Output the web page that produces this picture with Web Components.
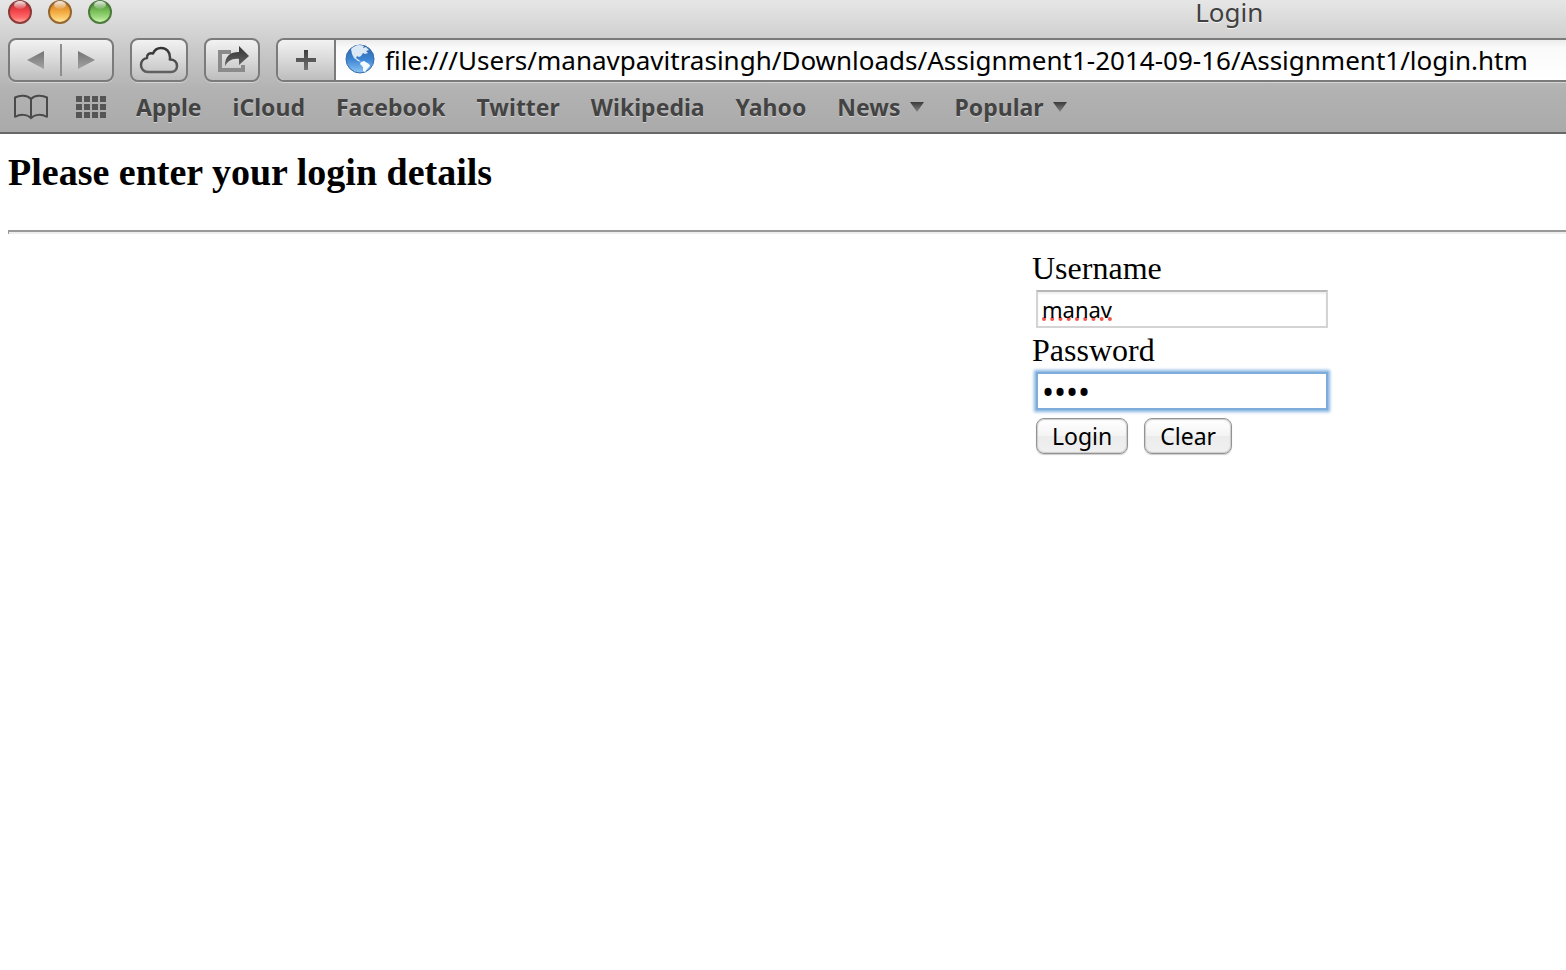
<!DOCTYPE html>
<html lang="en">
<head>
<meta charset="utf-8">
<title>Login</title>
<style>
  html, body { margin: 0; background: #fff; }
</style>
</head>
<body>
<browser-window></browser-window>
<script>
const define = (name, html) => {
  const template = document.createElement('template');
  template.innerHTML = html;
  customElements.define(name, class extends HTMLElement {
    constructor() {
      super();
      this.attachShadow({ mode: 'open' }).append(template.content.cloneNode(true));
    }
  });
};

define('window-title', `
  <style>
    :host { display: grid; grid-template-columns: 894fr 672fr; height: 38px; }
    .lights { display: flex; gap: 16px; padding-left: 8px; }
    svg { display: block; width: 24px; height: 24px; }
    .title { grid-column: 1 / -1; grid-row: 1; padding-left: 57%; text-align: center; font: 26px/24px "Noto Sans", sans-serif; color: #404040; text-shadow: 0 1px 0 #f2f2f2; }
    .lights { grid-column: 1; grid-row: 1; }
  </style>
  <div class="lights">
    <svg viewBox="0 0 24 24" aria-label="Close">
      <defs>
        <linearGradient id="r" x2="0" y2="1"><stop stop-color="#b3282c"/><stop offset=".45" stop-color="#f1434a"/><stop offset=".75" stop-color="#ff6a69"/><stop offset="1" stop-color="#ffb6ac"/></linearGradient>
        <linearGradient id="s" x2="0" y2="1"><stop stop-color="#fff" stop-opacity=".9"/><stop offset="1" stop-color="#fff" stop-opacity=".1"/></linearGradient>
      </defs>
      <circle cx="12" cy="12" r="11" fill="url(#r)" stroke="#8c3a38" stroke-width="2"/><ellipse cx="12" cy="5" rx="6" ry="4" fill="url(#s)"/>
    </svg>
    <svg viewBox="0 0 24 24" aria-label="Minimise">
      <defs>
        <linearGradient id="y" x2="0" y2="1"><stop stop-color="#c57a26"/><stop offset=".45" stop-color="#efa43b"/><stop offset=".75" stop-color="#fcc96a"/><stop offset="1" stop-color="#fff0a8"/></linearGradient>
        <linearGradient id="s" x2="0" y2="1"><stop stop-color="#fff" stop-opacity=".9"/><stop offset="1" stop-color="#fff" stop-opacity=".1"/></linearGradient>
      </defs>
      <circle cx="12" cy="12" r="11" fill="url(#y)" stroke="#96662f" stroke-width="2"/><ellipse cx="12" cy="5" rx="6" ry="4" fill="url(#s)"/>
    </svg>
    <svg viewBox="0 0 24 24" aria-label="Zoom">
      <defs>
        <linearGradient id="g" x2="0" y2="1"><stop stop-color="#45802f"/><stop offset=".45" stop-color="#76bd57"/><stop offset=".75" stop-color="#a0db80"/><stop offset="1" stop-color="#d9ffb9"/></linearGradient>
        <linearGradient id="s" x2="0" y2="1"><stop stop-color="#fff" stop-opacity=".9"/><stop offset="1" stop-color="#fff" stop-opacity=".1"/></linearGradient>
      </defs>
      <circle cx="12" cy="12" r="11" fill="url(#g)" stroke="#4c7a3c" stroke-width="2"/><ellipse cx="12" cy="5" rx="6" ry="4" fill="url(#s)"/>
    </svg>
  </div>
  <div class="title">Login</div>`);

define('tool-button', `
  <style>
    :host { display: block; }
    button { display: flex; align-items: center; justify-content: center; box-sizing: border-box; height: 44px; width: 100%; margin: 0; padding: 0; border: 2px solid #7b7b7b; border-radius: 8px; background: linear-gradient(#f2f2f2, #d9d9d9 50%, #bdbdbd); box-shadow: 0 1px 0 #d4d4d4; }
  </style>
  <button type="button"><slot></slot></button>`);

define('tool-bar', `
  <style>
    :host { display: flex; gap: 16px; padding-left: 8px; }
    svg { display: block; }
    .history { display: flex; box-sizing: border-box; width: 106px; height: 44px; border: 2px solid #7b7b7b; border-radius: 8px; background: linear-gradient(#f2f2f2, #d9d9d9 50%, #bdbdbd); box-shadow: 0 1px 0 #d4d4d4; }
    button { margin: 0; padding: 0; border: 0; background: none; }
    .history button { flex: 1; display: flex; align-items: center; justify-content: center; }
    .rule { width: 2px; margin: 4px 0; background: #8e8e8e; }
    .cloud { width: 58px; }
    .share { width: 56px; }
    .address { flex: 1; display: flex; box-sizing: border-box; height: 44px; border: 2px solid #7b7b7b; border-right: 0; border-radius: 8px 0 0 8px; background: linear-gradient(#ececec, #fafafa 8px, #fff); box-shadow: 0 1px 0 #d4d4d4; }
    .add { display: flex; align-items: center; justify-content: center; width: 58px; border-right: 2px solid #7b7b7b; border-radius: 6px 0 0 6px; background: linear-gradient(#f2f2f2, #d9d9d9 50%, #bdbdbd); }
    .globe { margin: 4px 10px 0 9px; }
    input { flex: 1; min-width: 0; margin: 0; padding: 0; border: 0; outline: 0; background: none; font: 26px/40px "Noto Sans", sans-serif; color: #000; }
  </style>
  <div class="history">
    <button type="button" aria-label="Back"><svg width="18" height="20" viewBox="0 0 18 20"><defs><linearGradient id="b" x2="0" y2="1"><stop stop-color="#747474"/><stop offset="1" stop-color="#a3a3a3"/></linearGradient></defs><path d="M1 10 18 1V19Z" fill="url(#b)"/></svg></button>
    <span class="rule"></span>
    <button type="button" aria-label="Forward"><svg width="18" height="20" viewBox="0 0 18 20"><defs><linearGradient id="f" x2="0" y2="1"><stop stop-color="#747474"/><stop offset="1" stop-color="#a3a3a3"/></linearGradient></defs><path d="M17 10 0 1V19Z" fill="url(#f)"/></svg></button>
  </div>
  <tool-button class="cloud">
    <svg width="40" height="28" viewBox="0 0 40 28"><defs><linearGradient id="c" x2="0" y2="1"><stop stop-color="#333"/><stop offset="1" stop-color="#606060"/></linearGradient></defs><path d="M9 26C4.500 26 2 22.500 2 19C2 15.500 4.500 12.500 8 12C7.500 8.500 10.500 6.500 14 7.500C15.500 4 18 2 22 2C27.500 2 31 6 31 11.500C31 12.500 31 13 30.800 13.500C35 13.500 38 16 38 20C38 23.500 35.500 26 32 26Z" fill="none" stroke="url(#c)" stroke-width="2.500" stroke-linejoin="round"/></svg>
  </tool-button>
  <tool-button class="share">
    <svg width="34" height="28" viewBox="0 0 34 28"><defs><linearGradient id="a" x2="0" y2="1"><stop stop-color="#333"/><stop offset="1" stop-color="#646464"/></linearGradient></defs><path d="M16 6H5V24H28V19" fill="none" stroke="#8b8b8b" stroke-width="4"/><path d="M10 20C10 10 15 6 24 6V0L34 10L24 19V13C17 12 13 15 10 20Z" fill="url(#a)"/></svg>
  </tool-button>
  <div class="address">
    <button type="button" class="add" aria-label="Add bookmark"><svg width="20" height="20" viewBox="0 0 20 20"><defs><linearGradient id="p" x2="0" y2="1"><stop stop-color="#3c3c3c"/><stop offset="1" stop-color="#747474"/></linearGradient></defs><path d="M8 0H12V8H20V12H12V20H8V12H0V8H8Z" fill="url(#p)"/></svg></button>
    <svg class="globe" width="30" height="30" viewBox="0 0 30 30"><defs><linearGradient id="w" x2="0" y2="1"><stop stop-color="#2f62a4"/><stop offset=".5" stop-color="#3b83d2"/><stop offset="1" stop-color="#8cc5f4"/></linearGradient></defs><circle cx="15" cy="15" r="14" fill="url(#w)" stroke="#386ba7"/><path d="M6 5C8 3 11 1 15 1L19 2L18 4L21 3L24 6L21 7L23 9L20 10L18 9L16 12L14 13L12 12L11 14L14 16L16 18L13 17L9 14L7 10Z" fill="#dbe9f7"/><path d="M16 18L19 17L24 20L25 22L22 25L20 28L18 27L18 23L15 20Z" fill="#f5faff"/></svg>
    <input type="text" aria-label="Address" spellcheck="false" value="file:///Users/manavpavitrasingh/Downloads/Assignment1-2014-09-16/Assignment1/login.htm">
  </div>`);

define('bookmark-bar', `
  <style>
    :host { display: flex; align-items: center; height: 50px; padding-left: 13px; font: bold 23px/30px "Noto Sans", sans-serif; color: #434343; text-shadow: 0 1px 0 #cfcfcf; }
    nav { display: flex; gap: 31px; margin-left: 29px; }
    a { color: inherit; text-decoration: none; }
    button { display: flex; align-items: center; gap: 9px; margin: 0; padding: 0; border: 0; background: none; font: inherit; color: inherit; text-shadow: inherit; }
    .icon { display: block; }
    .grid { margin-left: 27px; }
    svg { display: block; }
  </style>
  <button type="button" class="icon" aria-label="Bookmarks"><svg width="36" height="26" viewBox="0 0 36 26"><path d="M18 5C14 1 7 1 2 3.500V23.500M18 5C22 1 29 1 34 3.500V23.500M18 5V23M2 23C7 20 14 20 18 24C22 20 29 20 34 23" fill="none" stroke="#4a4a4a" stroke-width="2"/></svg></button>
  <button type="button" class="icon grid" aria-label="Top sites"><svg width="31" height="22" viewBox="0 0 31 22"><path d="M0 0H6V6H0ZM8 0H14V6H8ZM16 0H22V6H16ZM24 0H30V6H24ZM0 8H6V14H0ZM8 8H14V14H8ZM16 8H22V14H16ZM24 8H30V14H24ZM0 16H6V22H0ZM8 16H14V22H8ZM16 16H22V22H16ZM24 16H30V22H24Z" fill="#555"/></svg></button>
  <nav>
    <a href="#apple">Apple</a>
    <a href="#icloud">iCloud</a>
    <a href="#facebook">Facebook</a>
    <a href="#twitter">Twitter</a>
    <a href="#wikipedia">Wikipedia</a>
    <a href="#yahoo">Yahoo</a>
    <button type="button">News<svg width="14" height="10" viewBox="0 0 14 10"><defs><linearGradient id="n" x2="0" y2="1"><stop stop-color="#3a3a3a"/><stop offset="1" stop-color="#858585"/></linearGradient></defs><path d="M0 0H14L7 10Z" fill="url(#n)"/></svg></button>
    <button type="button">Popular<svg width="14" height="10" viewBox="0 0 14 10"><defs><linearGradient id="m" x2="0" y2="1"><stop stop-color="#3a3a3a"/><stop offset="1" stop-color="#858585"/></linearGradient></defs><path d="M0 0H14L7 10Z" fill="url(#m)"/></svg></button>
  </nav>`);

define('login-form', `
  <style>
    :host { display: grid; grid-template-columns: 1032fr 534fr; }
    form { grid-column: 2; font: 32px/36px "Liberation Serif", serif; color: #000; }
    label { display: block; }
    input { display: block; box-sizing: border-box; width: 292px; height: 38px; margin: 4px; padding: 0 4px; border: 2px solid #d4d4d4; border-top-color: #b8b8b8; border-radius: 0; outline: 0; background: #fff; box-shadow: inset 0 2px 2px #f0f0f0; font: 22px/34px "Noto Sans", sans-serif; color: #000; }
    .checked { text-decoration: underline dotted #f4564c 4px; text-decoration-skip-ink: none; text-underline-offset: -1px; }
    .focused { border-color: #7eaddb; box-shadow: 0 0 3px 2px #86b4e2; font-size: 32px; }
    .actions { display: flex; gap: 16px; padding: 4px; }
    button { box-sizing: border-box; height: 36px; margin: 0; padding: 0 15px; border: 1px solid #939393; border-radius: 8px; background: linear-gradient(#fff, #f4f4f4 50%, #ececec 51%, #f0f0f0); box-shadow: 0 0 1px 1px #ccc inset, 0 1px 1px #ccc; font: 23px/32px "Noto Sans", sans-serif; color: #000; }
  </style>
  <form>
    <label for="user">Username</label>
    <input id="user" class="checked" type="text" spellcheck="false" value="manav">
    <label for="pass">Password</label>
    <input id="pass" class="focused" type="password" value="1234">
    <div class="actions"><button type="button">Login</button><button type="reset">Clear</button></div>
  </form>`);

define('login-page', `
  <style>
    :host { display: block; padding-top: 16px; }
    h3 { margin: 0 8px; font: bold 38px/44px "Liberation Serif", serif; color: #000; }
    hr { margin: 36px 0 16px 8px; border: 0; border-top: 2px solid #999; border-left: 1px solid #999; height: 2px; background: #eee; }
  </style>
  <h3>Please enter your login details</h3>
  <hr>
  <login-form></login-form>`);

define('browser-window', `
  <style>
    :host { display: block; min-height: 100vh; background: #fff; }
    header { background: linear-gradient(#e6e6e6, #d0d0d0 38px, #b2b2b2 90px, #aaa); border-bottom: 2px solid #686868; }
  </style>
  <header>
    <window-title></window-title>
    <tool-bar></tool-bar>
    <bookmark-bar></bookmark-bar>
  </header>
  <main><login-page></login-page></main>`);
</script>
</body>
</html>
